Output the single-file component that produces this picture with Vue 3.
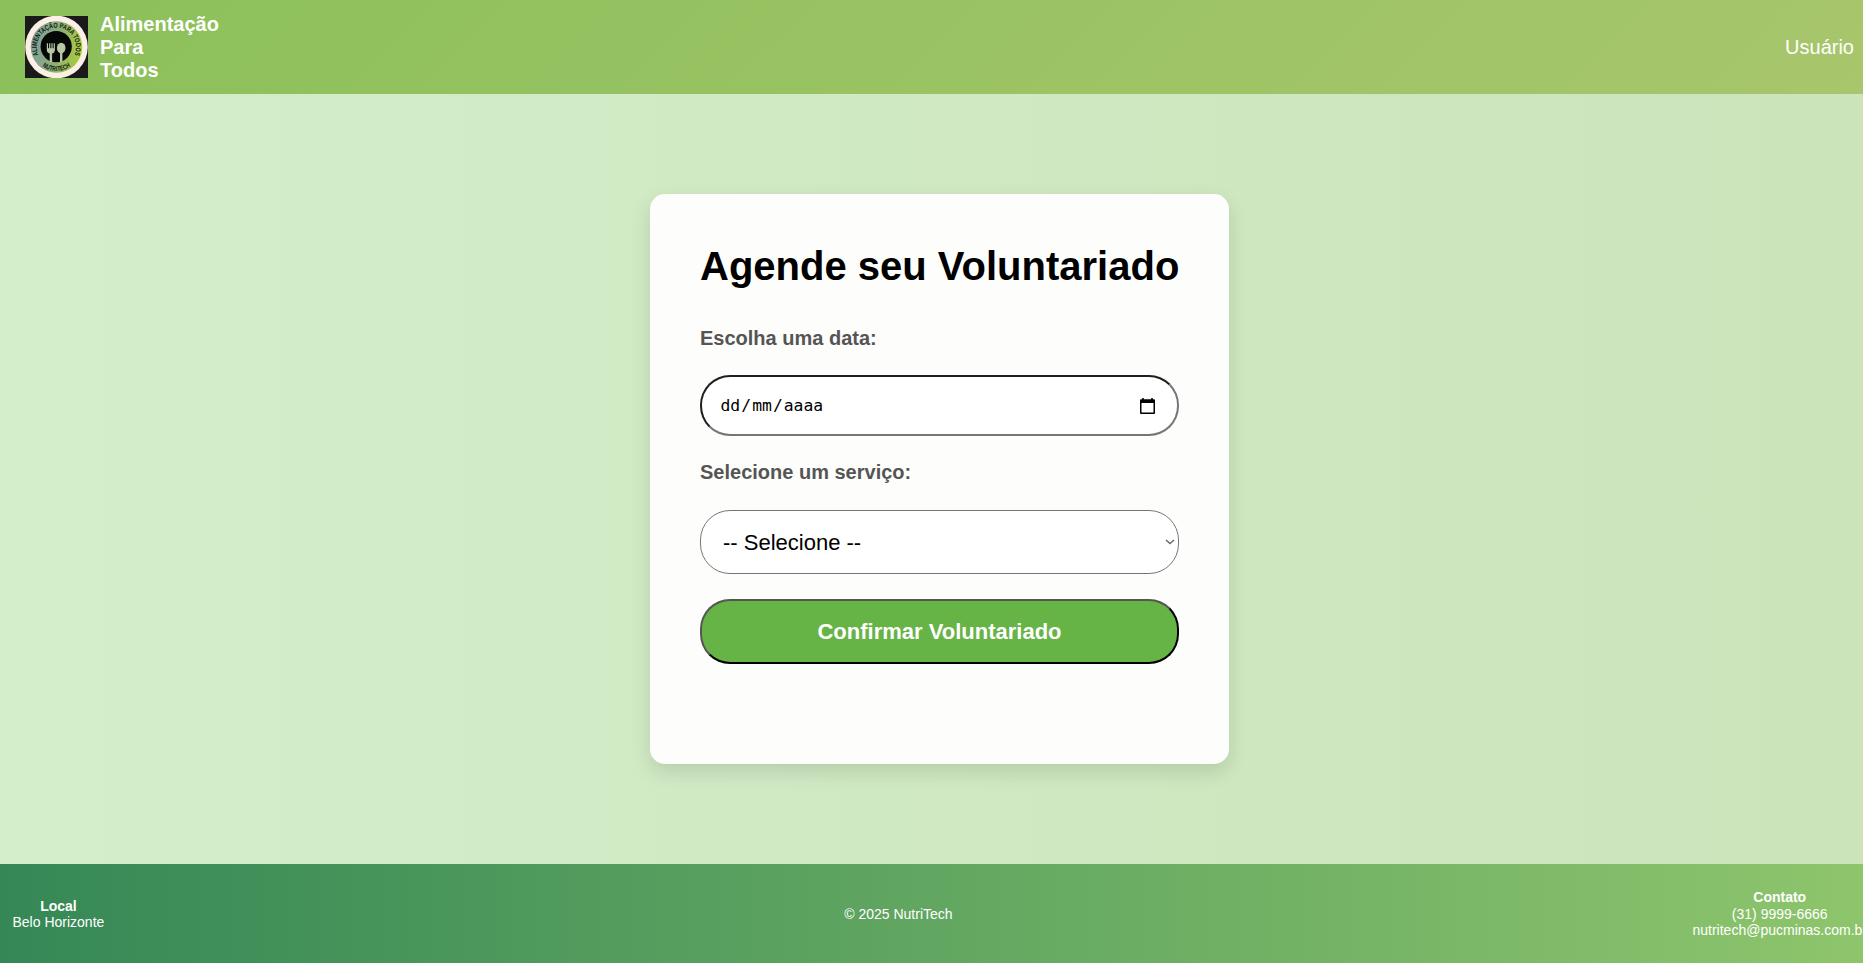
<script setup>
import { ref } from 'vue'

const service = ref('')
const brand = ['Alimentação', 'Para', 'Todos']
</script>

<template>
  <div class="page">
    <header class="header">
      <div class="brand">
        <svg class="logo" viewBox="0 0 63 62" aria-label="NutriTech">
          <defs>
            <linearGradient id="ring" x1="0" y1="0.3" x2="1" y2="0.5">
              <stop offset="0" stop-color="#7f9fa0" />
              <stop offset="0.5" stop-color="#8cad78" />
              <stop offset="1" stop-color="#a9cc3c" />
            </linearGradient>
            <path id="arc-top" d="M13.4 39 A19.6 19.6 0 1 1 49.4 39" />
            <path id="arc-bottom" d="M14.9 48.4 A24 24 0 0 0 48.1 48.4" />
          </defs>
          <rect width="63" height="62" fill="#1b1a1b" />
          <circle cx="31.5" cy="31" r="31.3" fill="#fdeee6" />
          <circle cx="31.5" cy="31" r="25.8" fill="url(#ring)" />
          <circle cx="31.2" cy="30.6" r="15.6" fill="#050806" />
          <text class="logo-text"><textPath href="#arc-top" textLength="77" lengthAdjust="spacingAndGlyphs">ALIMENTAÇÃO PARA TODOS</textPath></text>
          <text class="logo-text"><textPath href="#arc-bottom" startOffset="3.2" textLength="30" lengthAdjust="spacingAndGlyphs">NUTRITECH</textPath></text>
          <g fill="#b9c6a5">
            <path d="M21.8 27.3h1.2v5h1.1v-5h1.2v5h1.1v-5h1.2v5h1.1v-5h1.2v6.5q0 3-2.8 3.6V46h-2.4v-8.6q-2.9-.6-2.9-3.6z" />
            <ellipse cx="36.2" cy="32" rx="4.3" ry="5.3" />
            <path d="M35 36h2.4v10H35z" />
          </g>
        </svg>
        <div class="brand-name">
          <span v-for="word in brand" :key="word">{{ word }}</span>
        </div>
      </div>
      <a class="user">Usuário</a>
    </header>

    <main class="main">
      <form class="card" @submit.prevent>
        <h1>Agende seu Voluntariado</h1>
        <label>Escolha uma data:</label>
        <div class="date" tabindex="0">
          <span class="date-text"><span>dd</span>/<span>mm</span>/<span>aaaa</span></span>
          <svg class="calendar" viewBox="0 0 15 16">
            <path d="M2.2 0h1.6v1.3h7.4V0h1.6v1.3H14q1 0 1 1V15q0 1-1 1H1q-1 0-1-1V2.3q0-1 1-1h1.2zM1.5 5v9.5h12V5z" fill="#000" fill-rule="evenodd" />
          </svg>
        </div>
        <label for="service">Selecione um serviço:</label>
        <div class="select-wrap">
          <select id="service" v-model="service">
            <option value="">-- Selecione --</option>
          </select>
          <svg class="chevron" viewBox="0 0 10 6">
            <path d="M1 1l4 3.6L9 1" fill="none" stroke="#6b6b6b" stroke-width="1.5" />
          </svg>
        </div>
        <button type="submit">Confirmar Voluntariado</button>
      </form>
    </main>

    <footer class="footer">
      <div><strong>Local</strong><span>Belo Horizonte</span></div>
      <div><span>© 2025 NutriTech</span></div>
      <div><strong>Contato</strong><span>(31) 9999-6666</span><span>nutritech@pucminas.com.br</span></div>
    </footer>
  </div>
</template>

<style>
body {
  margin: 0;
  overflow: hidden;
}
</style>

<style scoped>
.page {
  height: 963px;
  display: flex;
  flex-direction: column;
  overflow: hidden;
  font-family: Arial, "Liberation Sans", sans-serif;
  background: linear-gradient(to right, #d4eecb, #cbe4ba);
}
.header {
  height: 94px;
  flex: none;
  box-sizing: border-box;
  display: flex;
  align-items: center;
  justify-content: space-between;
  padding: 0 9px 0 25px;
  color: #fff;
  background: linear-gradient(135deg, #8bc05a, #a8c66c);
}
.brand {
  display: flex;
  align-items: center;
  gap: 12px;
}
.logo {
  width: 63px;
  height: 62px;
}
.logo-text {
  font: bold 7px "Liberation Sans", sans-serif;
  fill: #101a12;
}
.brand-name {
  display: flex;
  flex-direction: column;
  font-size: 20px;
  line-height: 23px;
  font-weight: bold;
}
.user {
  font-size: 20px;
}
.main {
  flex: 1;
  display: flex;
  align-items: center;
  justify-content: center;
  padding-left: 16px;
}
.card {
  width: 579px;
  height: 570px;
  box-sizing: border-box;
  padding: 50px;
  display: flex;
  flex-direction: column;
  border-radius: 15px;
  background: #fdfefc;
  box-shadow: 0 8px 20px rgba(0, 0, 0, 0.12);
}
h1 {
  margin: 0 0 38px;
  font-size: 40px;
  line-height: 45px;
  white-space: nowrap;
}
label {
  margin-bottom: 25px;
  font-size: 20px;
  line-height: 23px;
  font-weight: bold;
  color: #555;
}
.date {
  height: 61px;
  box-sizing: border-box;
  display: flex;
  align-items: center;
  justify-content: space-between;
  margin-bottom: 25px;
  padding: 0 22px 0 18px;
  border: 2px solid;
  border-color: #1f1f1f #767676 #767676 #1f1f1f;
  border-radius: 30px;
  background: #fff;
}
.date-text {
  margin-left: -0.5px;
  font-family: Consolas, "DejaVu Sans Mono", monospace;
  font-size: 16.4px;
}
.date-text span {
  padding: 0 1px;
}
.calendar {
  width: 15px;
  height: 16px;
}
.select-wrap {
  position: relative;
  display: flex;
  margin: 1px 0 25px;
}
select {
  flex: 1;
  height: 64px;
  box-sizing: border-box;
  margin: 0;
  padding: 0 0 0 22px;
  appearance: none;
  border: 1px solid #767676;
  border-radius: 30px;
  background: #fff;
  color: #000;
  font-family: inherit;
  font-size: 22px;
}
.chevron {
  position: absolute;
  top: 29px;
  right: 4px;
  width: 10px;
  height: 6px;
  pointer-events: none;
}
button {
  height: 65px;
  box-sizing: border-box;
  border: 2px solid;
  border-color: #555 #000 #000 #555;
  border-radius: 30px;
  background: #66b346;
  color: #fff;
  font-family: inherit;
  font-size: 22px;
  font-weight: bold;
}
.footer {
  height: 99px;
  flex: none;
  box-sizing: border-box;
  display: flex;
  align-items: center;
  justify-content: space-between;
  padding: 1px 0 0 12.5px;
  margin-right: -4px;
  color: #fff;
  font-size: 14px;
  line-height: 16.5px;
  text-align: center;
  background: linear-gradient(to right, #358856, #8ec56c);
}
.footer div {
  display: flex;
  flex-direction: column;
}
</style>
